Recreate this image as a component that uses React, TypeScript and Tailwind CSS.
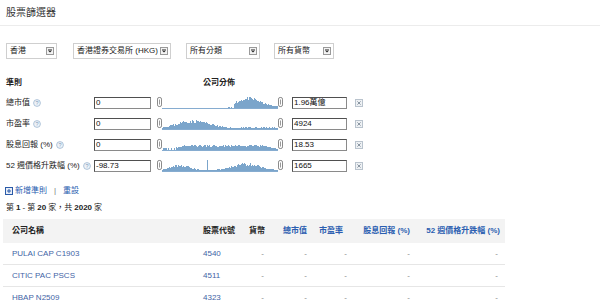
import React from 'react'

type Shape = (t: number, r: number, i: number) => number

const g = (t: number, c: number, w: number) => Math.exp(-(((t - c) / w) ** 2))

function makeBars(shape: Shape, seed: number, n = 116) {
  let s = seed
  const rand = () => {
    s = (s * 16807) % 2147483647
    return s / 2147483647
  }
  return Array.from({ length: n }, (_, i) => {
    const t = i / (n - 1)
    return Math.max(0, Math.min(11, shape(t, rand(), i)))
  })
}

const capShape: Shape = (t, r) =>
  t < 0.56 ? 0 : t < 0.62 ? (r > 0.7 ? 1 : 0) : (1.2 + 8 * g(t, 0.75, 0.15)) * (0.8 + 0.4 * r)

const peShape: Shape = (t, r) =>
  t < 0.68 ? (0.8 + 7 * g(t, 0.27, 0.2)) * (0.75 + 0.5 * r) : r > 0.45 ? 1 + r : 0.6

const divShape: Shape = (t, r) => {
  if (t < 0.12) return r > 0.5 ? 1 + 1.5 * r : 0
  const base = t < 0.2 ? 2 + (t - 0.12) * 30 : t < 0.88 ? 4.2 : 4.2 - (t - 0.88) * 25
  return base * (0.75 + 0.5 * r)
}

const weekShape: Shape = (t, r, i) => {
  if (i === 45) return 11
  const v = 5 * g(t, 0.15, 0.12) + 6 * g(t, 0.73, 0.17)
  return (0.7 + v) * (0.75 + 0.5 * r)
}

interface Criterion {
  label: string
  min: string
  max: string
  bars: number[]
}

const criteria: Criterion[] = [
  { label: '總市值', min: '0', max: '1.96萬億', bars: makeBars(capShape, 11) },
  { label: '市盈率', min: '0', max: '4924', bars: makeBars(peShape, 23) },
  { label: '股息回報 (%)', min: '0', max: '18.53', bars: makeBars(divShape, 37) },
  { label: '52 週價格升跌幅 (%)', min: '-98.73', max: '1665', bars: makeBars(weekShape, 53) },
]

const rows = [
  { name: 'PULAI CAP C1903', code: '4540' },
  { name: 'CITIC PAC PSCS', code: '4511' },
  { name: 'HBAP N2509', code: '4323' },
]

function SelectBox({ label, width }: { label: string; width: string }) {
  return (
    <div
      className={`flex h-[16px] items-center justify-between border border-[#cfcfcf] bg-white pl-[3px] pr-[2px] text-[8px] text-[#222] ${width}`}
    >
      <span className="whitespace-nowrap">{label}</span>
      <svg width="8" height="8" viewBox="0 0 8 8" className="ml-[2px] shrink-0">
        <rect x="0.5" y="0.5" width="7" height="7" fill="#f3f3f3" stroke="#9a9a9a" />
        <rect x="2" y="2.5" width="4" height="1" fill="#222" />
        <path d="M2.5 4 H5.5 L4 5.5 Z" fill="#222" />
      </svg>
    </div>
  )
}

function HelpIcon() {
  return (
    <svg width="8" height="8" viewBox="0 0 8 8" className="ml-[3px] shrink-0">
      <circle cx="4" cy="4" r="3.4" fill="#eef3f8" stroke="#9db6d0" strokeWidth="0.8" />
      <text x="4" y="6.2" textAnchor="middle" fontSize="5.5" fill="#7d9cbc" fontFamily="Liberation Sans, sans-serif">
        ?
      </text>
    </svg>
  )
}

function Slider({ bars }: { bars: number[] }) {
  return (
    <svg width="126" height="13" viewBox="0 0 126 13" shapeRendering="crispEdges" className="shrink-0">
      {bars.map((h, i) =>
        h > 0.4 ? (
          <rect key={i} x={5 + i} y={12 - Math.round(h)} width="1" height={Math.round(h)} fill="#7ba5cb" />
        ) : null,
      )}
      <rect x="5" y="12" width="116" height="1" fill="#86acd0" />
      <g shapeRendering="auto">
        <rect x="0.5" y="1.5" width="4" height="9" rx="1.6" fill="#fff" stroke="#8a8a8a" />
        <line x1="2.5" y1="3.5" x2="2.5" y2="8.5" stroke="#9a9a9a" />
        <rect x="121.5" y="1.5" width="4" height="9" rx="1.6" fill="#fff" stroke="#8a8a8a" />
        <line x1="123.5" y1="3.5" x2="123.5" y2="8.5" stroke="#9a9a9a" />
      </g>
    </svg>
  )
}

function ValueBox({ value, width }: { value: string; width: string }) {
  return (
    <div
      className={`flex h-[12px] shrink-0 items-center border border-[#8a8a8a] border-t-[#4f4f4f] border-l-[#4f4f4f] bg-white pl-[1px] text-[8px] leading-none text-[#111] ${width}`}
    >
      {value}
    </div>
  )
}

function RemoveIcon() {
  return (
    <svg width="8" height="8" viewBox="0 0 8 8" className="shrink-0">
      <rect x="0.5" y="0.5" width="7" height="7" fill="#eef1f4" stroke="#b9c3cd" />
      <path d="M2.4 2.4 L5.6 5.6 M5.6 2.4 L2.4 5.6" stroke="#7f8c99" strokeWidth="0.9" />
    </svg>
  )
}

const cols = 'grid grid-cols-[200px_40px_22px_42px_40px_63px_90px] pr-[5px]'

export default function App() {
  return (
    <div className="h-[306px] w-[600px] overflow-hidden bg-white font-['Liberation_Sans','Noto_Sans_CJK_TC',sans-serif] text-[8px] text-[#222]">
      <div className="h-[26px] border-b border-[#ececec] px-[6px] pt-[7px] text-[10px] leading-[12px] text-[#333]">
        股票篩選器
      </div>

      <div className="mt-[17px] flex pl-[6px]">
        <SelectBox label="香港" width="w-[51px]" />
        <div className="ml-[16px]">
          <SelectBox label="香港證券交易所 (HKG)" width="w-[98px]" />
        </div>
        <div className="ml-[15px]">
          <SelectBox label="所有分類" width="w-[74px]" />
        </div>
        <div className="ml-[14px]">
          <SelectBox label="所有貨幣" width="w-[60px]" />
        </div>
      </div>

      <div className="mt-[18px] flex h-[12px] items-center pl-[6px] font-bold">
        <span className="w-[197px]">準則</span>
        <span>公司分佈</span>
      </div>

      <div className="mt-[3px]">
        {criteria.map((c) => (
          <div key={c.label} className="flex h-[21px] items-center pl-[6px]">
            <div className="flex w-[88px] shrink-0 items-center whitespace-nowrap">
              {c.label}
              <HelpIcon />
            </div>
            <ValueBox value={c.min} width="w-[57px]" />
            <div className="ml-[6px] flex">
              <Slider bars={c.bars} />
            </div>
            <div className="ml-[9px]">
              <ValueBox value={c.max} width="w-[55px]" />
            </div>
            <div className="ml-[8px]">
              <RemoveIcon />
            </div>
          </div>
        ))}
      </div>

      <div className="mt-[9px] flex h-[12px] items-center pl-[5px]">
        <svg width="8" height="8" viewBox="0 0 8 8" className="shrink-0">
          <rect x="0.5" y="0.5" width="7" height="7" fill="#e8eef8" stroke="#2a5aa8" />
          <path d="M4 2 V6 M2 4 H6" stroke="#2a5aa8" />
        </svg>
        <span className="ml-[2px] text-[#2a5db0]">新增準則</span>
        <span className="ml-[7px] text-[#777]">|</span>
        <span className="ml-[7px] text-[#2a5db0]">重設</span>
      </div>

      <div className="mt-[5px] flex h-[12px] items-center pl-[6px] text-[#222]">
        第 <b className="mx-[2px]">1</b> - 第 <b className="mx-[2px]">20</b> 家，共{' '}
        <b className="mx-[2px]">2020</b> 家
      </div>

      <div className="ml-[3px] mt-[5px] w-[502px]">
        <div className={`${cols} h-[24px] items-center bg-[#f3f3f3] font-bold`}>
          <span className="pl-[9px] text-[#222]">公司名稱</span>
          <span className="text-[#222]">股票代號</span>
          <span className="text-right text-[#222]">貨幣</span>
          <span className="text-right text-[#2a5db0]">總市值</span>
          <span className="pr-[4px] text-right text-[#2a5db0]">市盈率</span>
          <span className="text-right text-[#2a5db0]">股息回報 (%)</span>
          <span className="whitespace-nowrap text-right text-[#2a5db0]">52 週價格升跌幅 (%)</span>
        </div>
        {rows.map((r) => (
          <div key={r.code} className={`${cols} h-[22px] items-center border-b border-[#e6e6e6]`}>
            <span className="pl-[9px] text-[#3f64a6]">{r.name}</span>
            <span className="text-[#3f64a6]">{r.code}</span>
            <span className="pr-[1px] text-right text-[#888]">-</span>
            <span className="text-right text-[#888]">-</span>
            <span className="text-right text-[#888]">-</span>
            <span className="text-right text-[#888]">-</span>
            <span className="pr-[2px] text-right text-[#888]">-</span>
          </div>
        ))}
      </div>
    </div>
  )
}
